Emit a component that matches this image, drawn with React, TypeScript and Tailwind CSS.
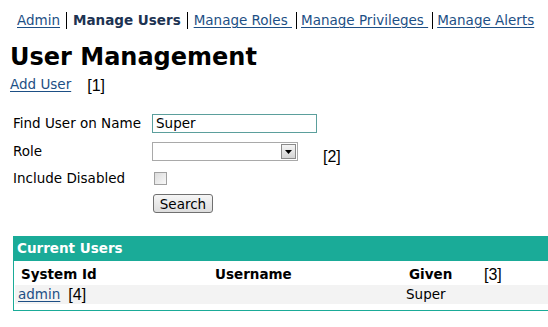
import React from 'react'

const font = { fontFamily: '"DejaVu Sans", Verdana, sans-serif' }
const arial = { fontFamily: '"Liberation Sans", Arial, sans-serif' }

function NavLink({ children }: { children: React.ReactNode }) {
  return <a href="#" className="text-[#1d4f85] underline decoration-1 underline-offset-2">{children}</a>
}

export default function App() {
  return (
    <div className="min-h-[327px] w-[548px] overflow-hidden bg-white text-[13.5px] text-black" style={font}>
      <nav className="flex items-center pl-[17px] pt-[12px] leading-[17px]">
        <NavLink>Admin</NavLink>
        <span className="mx-[6px] h-[17px] border-l border-black" />
        <span className="font-bold text-[#1d3352]">Manage Users</span>
        <span className="mx-[6px] h-[17px] border-l border-black" />
        <NavLink>Manage Roles&nbsp;</NavLink>
        <span className="mx-[4px] h-[17px] border-l border-black" />
        <NavLink>Manage Privileges&nbsp;</NavLink>
        <span className="mx-[4px] h-[17px] border-l border-black" />
        <NavLink>Manage Alerts</NavLink>
      </nav>

      <h1 className="ml-[10px] mt-[15px] text-[24px] font-bold leading-[26px]">User Management</h1>

      <div className="ml-[10px] mt-[4px] flex h-[22px] items-start">
        <NavLink>Add User</NavLink>
        <span className="ml-[16px] mt-[3px] text-[16px] leading-[18px]" style={arial}>[1]</span>
      </div>

      <div className="ml-[13px] mt-[18px] flex flex-col">
        <div className="flex h-[19px] items-center">
          <span className="w-[139px]">Find User on Name</span>
          <input
            defaultValue="Super"
            className="h-[19px] w-[165px] border border-[#5b9f9c] px-[3px] text-[13.5px] outline-none"
            style={font}
          />
        </div>

        <div className="mt-[9px] flex h-[19px] items-center">
          <span className="w-[139px]">Role</span>
          <div className="flex h-[19px] w-[146px] items-center justify-end border border-[#a9a9a9] bg-white pr-[1px]">
            <div className="flex h-[15px] w-[15px] items-center justify-center border border-[#8a8a8a] bg-gradient-to-b from-[#f4f4f4] to-[#d4d4d4]">
              <svg width="7" height="4" viewBox="0 0 7 4"><path d="M0 0h7L3.5 4z" fill="#000" /></svg>
            </div>
          </div>
          <span className="ml-[25px] mt-[11px] text-[16px] leading-[18px]" style={arial}>[2]</span>
        </div>

        <div className="mt-[8px] flex h-[19px] items-center">
          <span className="w-[141px]">Include Disabled</span>
          <div className="h-[13px] w-[13px] border border-[#a0a0a0] bg-gradient-to-br from-[#dcdcdc] to-[#f8f8f8]" />
        </div>

        <div className="mt-[6px] flex h-[19px] items-center pl-[140px]">
          <button
            className="h-[19px] w-[60px] rounded-[3px] border border-[#707070] bg-gradient-to-b from-[#f6f6f6] to-[#dddddd] text-[13.5px] leading-[16px]"
            style={font}
          >
            Search
          </button>
        </div>
      </div>

      <div className="ml-[13px] mt-[23px] w-[560px] border border-[#1aab98]">
        <div className="h-[24px] bg-[#1aab98] pl-[3px] font-bold leading-[23px] text-white">Current Users</div>
        <div className="flex h-[24px] items-center pt-[2px]">
          <span className="w-[201px] pl-[7px] font-bold">System Id</span>
          <span className="w-[194px] font-bold">Username</span>
          <span className="w-[75px] font-bold">Given</span>
          <span className="mt-[2px] text-[16px] leading-[18px]" style={arial}>[3]</span>
        </div>
        <div className="mb-[6px] ml-[1px] flex h-[19px] items-center bg-[#f3f3f3]">
          <span className="flex w-[391px] items-center pl-[3px]">
            <NavLink>admin</NavLink>
            <span className="ml-[8px] text-[16px] leading-[18px]" style={arial}>[4]</span>
          </span>
          <span>Super</span>
        </div>
      </div>
    </div>
  )
}
